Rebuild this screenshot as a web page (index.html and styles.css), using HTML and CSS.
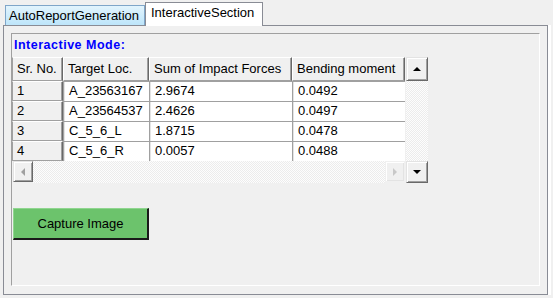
FILE: index.html
```html
<!DOCTYPE html>
<html lang="en">
<head>
  <meta charset="UTF-8">
  <title>Interactive Section</title>
  <link rel="stylesheet" href="styles.css">
</head>
<body>

<div class="tabs">
  <div class="tab">AutoReportGeneration</div>
  <div class="tab active">InteractiveSection</div>
</div>

<div class="panel">
  <div class="group">
    <div class="title">Interactive Mode:</div>

    <div class="grid">
      <div class="grid-main">
        <div class="row head">
          <div class="cell c1">Sr. No.</div>
          <div class="cell c2">Target Loc.</div>
          <div class="cell c3">Sum of Impact Forces</div>
          <div class="cell c4">Bending moment</div>
        </div>
        <div class="row">
          <div class="cell c1 rowhead">1</div>
          <div class="cell c2">A_23563167</div>
          <div class="cell c3">2.9674</div>
          <div class="cell c4">0.0492</div>
        </div>
        <div class="row">
          <div class="cell c1 rowhead">2</div>
          <div class="cell c2">A_23564537</div>
          <div class="cell c3">2.4626</div>
          <div class="cell c4">0.0497</div>
        </div>
        <div class="row">
          <div class="cell c1 rowhead">3</div>
          <div class="cell c2">C_5_6_L</div>
          <div class="cell c3">1.8715</div>
          <div class="cell c4">0.0478</div>
        </div>
        <div class="row">
          <div class="cell c1 rowhead">4</div>
          <div class="cell c2">C_5_6_R</div>
          <div class="cell c3">0.0057</div>
          <div class="cell c4">0.0488</div>
        </div>
        <div class="hscroll">
          <div class="sbtn"><span class="arrow left"></span></div>
          <div class="track"></div>
          <div class="sbtn flat"><span class="arrow right"></span></div>
        </div>
      </div>
      <div class="vscroll">
        <div class="sbtn"><span class="arrow up"></span></div>
        <div class="track"></div>
        <div class="sbtn"><span class="arrow down"></span></div>
      </div>
    </div>

    <button class="capture">Capture Image</button>
  </div>
</div>

</body>
</html>
```

FILE: styles.css
```css
* {
  box-sizing: border-box;
}
body {
  margin: 0;
  background: #f0f0f0;
  font-family: "Liberation Sans", Arial, sans-serif;
  font-size: 13px;
  color: #000;
}
.tabs {
  display: flex;
  align-items: flex-end;
  height: 25px;
  padding-left: 5px;
  position: relative;
  z-index: 1;
}
.tab {
  width: 140px;
  height: 20px;
  line-height: 20px;
  padding-left: 3px;
  background: linear-gradient(#e2f4fd, #bde5fa);
  border: 1px solid #7fa6c9;
  border-bottom: none;
}
.tab.active {
  width: 118px;
  height: 24px;
  line-height: 19px;
  padding-left: 5px;
  margin-bottom: -1px;
  background: #fff;
  border-color: #898c95;
}
.panel {
  margin-left: 3px;
  width: 545px;
  height: 270px;
  border: 1px solid #898c95;
  padding: 7px;
  box-shadow: 3px 0 0 #fff;
}
.group {
  width: 529px;
  height: 253px;
  border-top: 1px solid #a0a0a0;
  border-left: 1px solid #a0a0a0;
  border-right: 1px solid #fff;
  border-bottom: 1px solid #fff;
}
.title {
  padding: 4px 0 0 2px;
  height: 23px;
  line-height: 15px;
  font-size: 12.5px;
  font-weight: bold;
  letter-spacing: 0.5px;
  color: #0000ff;
}
.grid {
  display: flex;
}
.grid-main {
  display: flex;
  flex-direction: column;
}
.row {
  display: flex;
  height: 20px;
}
.row.head {
  height: 24px;
}
.cell {
  background: #fff;
  border-left: 1px solid #a0a0a0;
  border-top: 1px solid #a0a0a0;
  box-shadow: inset 1px 0 0 #e3e3e3;
  padding-left: 5px;
  line-height: 18px;
  white-space: nowrap;
  overflow: hidden;
}
.c1 { width: 51px; }
.c2 { width: 86px; }
.c3 { width: 143px; }
.c4 { width: 113px; }
.head .cell,
.cell.rowhead {
  background: #f0f0f0;
  border-top: 1px solid #fff;
  border-left: 1px solid #fff;
  border-right: 1px solid #696969;
  border-bottom: 1px solid #a0a0a0;
  box-shadow: inset -1px 0 0 #a0a0a0;
  padding-left: 4px;
}
.head .cell {
  line-height: 22px;
}
.head .c1 {
  border-left-color: #a0a0a0;
}
.cell.rowhead {
  line-height: 18px;
  border-left-color: #a0a0a0;
}
.hscroll {
  display: flex;
  height: 22px;
  padding-left: 1px;
}
.hscroll .sbtn {
  width: 20px;
  height: 21px;
}
.hscroll .track {
  flex: 1;
}
.vscroll {
  display: flex;
  flex-direction: column;
  width: 23px;
  padding-left: 1px;
}
.vscroll .sbtn {
  height: 24px;
}
.vscroll .sbtn:last-child {
  height: 22px;
}
.vscroll .track {
  flex: 1;
}
.track {
  background: repeating-conic-gradient(#fdfdfd 0 25%, #ececec 0 50%) 0 0 / 2px 2px;
}
.sbtn {
  display: flex;
  align-items: center;
  justify-content: center;
  background: #f0f0f0;
  border-top: 1px solid #e3e3e3;
  border-left: 1px solid #e3e3e3;
  border-right: 1px solid #696969;
  border-bottom: 1px solid #696969;
  box-shadow: inset 1px 1px 0 #fff, inset -1px -1px 0 #a0a0a0;
}
.sbtn.flat {
  border-color: #f0f0f0;
  box-shadow: inset 1px 1px 0 #fff, inset -1px -1px 0 #e3e3e3;
}
.arrow {
  width: 0;
  height: 0;
  border: 4px solid transparent;
}
.arrow.up {
  border-bottom-color: #000;
  border-top-width: 0;
}
.arrow.down {
  border-top-color: #000;
  border-bottom-width: 0;
}
.arrow.left {
  border-right-color: #a0a0a0;
  border-left-width: 0;
}
.arrow.right {
  border-left-color: #c8c8c8;
  border-right-width: 0;
}
.capture {
  display: block;
  margin: 25px 0 0 1px;
  width: 136px;
  height: 32px;
  padding: 0;
  font-family: "Liberation Sans", Arial, sans-serif;
  font-size: 13px;
  color: #000;
  background: #6cc36c;
  border-top: 1px solid #8fd68f;
  border-left: 1px solid #8fd68f;
  border-right: 2px solid #1a1a1a;
  border-bottom: 2px solid #1a1a1a;
}
```
